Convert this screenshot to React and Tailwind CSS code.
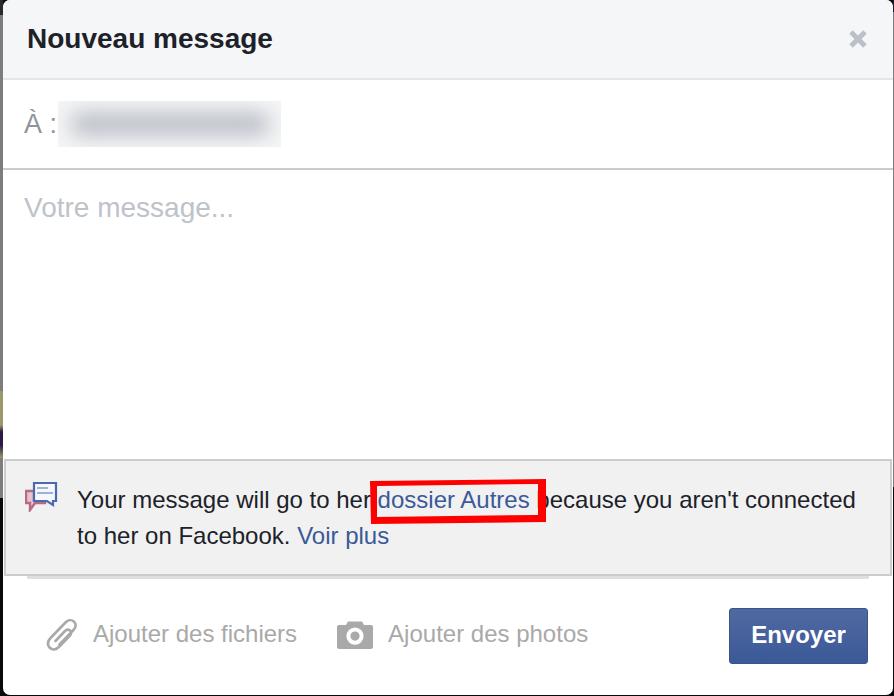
export default function App() {
  return (
    <div className="relative flex h-[696px] w-[894px] items-start overflow-hidden bg-[#0a0a0a] font-['Liberation_Sans',Arial,sans-serif]">
      {/* Page behind the dialog */}
      <div className="h-full w-[3px] shrink-0 bg-[linear-gradient(to_bottom,#2a2a2a_15px,#7d7d7d_15px,#7d7d7d_391px,#9a9a68_391px,#9a9a68_425px,#2a1a4a_432px,#2a1a4a_445px,#9a9a68_458px,#7d7d7d_458px,#7d7d7d_498px,#0a0a0a_498px)]" />

      {/* Dialog */}
      <div className="flex h-[695px] w-[890px] shrink-0 flex-col overflow-hidden rounded-[7px] bg-white">
        {/* Header */}
        <div className="flex h-[80px] shrink-0 items-center justify-between border-b-2 border-[#e5e6e9] bg-[#f5f6f7] pl-[24px] pr-[25px]">
          <h1 className="text-[28px] font-bold text-[#1d2129]">Nouveau message</h1>
          <svg width="20" height="20" viewBox="0 0 20 20">
            <path d="M3 3 L17 17 M17 3 L3 17" stroke="#bcc0c9" strokeWidth="5" />
          </svg>
        </div>

        {/* To */}
        <div className="flex h-[90px] shrink-0 items-center border-b-2 border-[#cccccc] pl-[21px]">
          <span className="w-[34px] text-[27px] text-[#90949c]">À :</span>
          <div className="h-[46px] w-[223px] overflow-hidden bg-[#f4f5f6]">
            <div className="ml-[12px] mt-[11px] h-[24px] w-[200px] rounded-full bg-[#bcc0c9] blur-[10px]" />
          </div>
        </div>

        {/* Message */}
        <div className="h-[289px] shrink-0 pl-[21px] pt-[17px] text-[28px] text-[#bec3c9]">Votre message...</div>

        {/* Notice */}
        <div className="mx-[1px] flex h-[117px] shrink-0 border-2 border-[#cccccc] bg-[#f1f1f1] pl-[19px] pt-[21px]">
          <svg width="33" height="30" viewBox="0 0 33 30" className="shrink-0">
            <path d="M1 9 H9 V18 H20 V21 H10 L5 28 L5 21 H1 Z" fill="#e8c3cf" stroke="#b76a85" strokeWidth="2.4" />
            <path d="M9 1 H31 V19 H28 V23 L22 19 H9 Z" fill="#f5f7fc" stroke="#4a6aab" strokeWidth="2.2" />
            <path d="M12 6 H23 M12 11 H28" stroke="#9db0d8" strokeWidth="2" />
          </svg>
          <p className="ml-[19px] w-[800px] text-[24px] leading-[36px] text-[#1d2129]">
            Your message will go to her <span className="text-[#3b5998]">dossier Autres</span> because you aren't connected
            to her on Facebook. <span className="text-[#3b5998]">Voir plus</span>
          </p>
        </div>
        <div className="mx-[24px] h-[3px] shrink-0 bg-[#dddfe2]" />

        {/* Footer */}
        <div className="flex flex-1 items-start pl-[43px] pr-[25px] pt-[29px]">
          <div className="flex h-[54px] items-center text-[24px] text-[#a9a9a9]">
            <svg width="34" height="34" viewBox="0 0 34 34" fill="none" className="mr-[13px]">
              <path
                d="M13.5 26.5 L27.5 12 C30 9.5 30.5 6 28 3.6 C25.5 1.3 22 2 19.5 4.5 L4.5 20 C1.5 23.2 1.3 27 3.8 29.8 C6.5 32.3 10 31.8 12.8 29 L24 17.5 C25.5 16 25.5 13.5 24 12.5 C22.5 11.2 20.5 11.5 19 13 L9.5 23"
                stroke="#a9a9a9"
                strokeWidth="2.6"
                strokeLinecap="round"
              />
            </svg>
            <span className="mt-[-2px]">Ajouter des fichiers</span>
            <svg width="36" height="28" viewBox="0 0 36 28" className="ml-[40px] mr-[15px]">
              <path
                fillRule="evenodd"
                fill="#a9a9a9"
                d="M2 4 H9 L11 0.5 H25 L27 4 H34 C35.2 4 36 4.8 36 6 V26 C36 27.2 35.2 28 34 28 H2 C0.8 28 0 27.2 0 26 V6 C0 4.8 0.8 4 2 4 Z M18 6.5 A8.6 8.6 0 1 0 18 23.7 A8.6 8.6 0 1 0 18 6.5 Z M18 10.5 A4.6 4.6 0 1 1 18 19.7 A4.6 4.6 0 1 1 18 10.5 Z"
              />
            </svg>
            <span className="mt-[-2px]">Ajouter des photos</span>
          </div>
          <button className="ml-auto h-[56px] w-[139px] rounded-[3px] border border-[#3b5487] bg-gradient-to-b from-[#5069a1] to-[#3b5998] pb-[2px] text-[24px] font-bold text-white">
            Envoyer
          </button>
        </div>
      </div>

      <div className="h-full w-[1px] shrink-0 bg-[linear-gradient(to_bottom,#1a1630_12px,#7d7d7d_12px,#7d7d7d_487px,#0a0a0a_487px)]" />

      {/* Red annotation */}
      <svg width="178" height="50" viewBox="0 0 178 50" className="absolute left-[369px] top-[476px]">
        <path
          fillRule="evenodd"
          fill="#fe0000"
          d="M1 5 L177 3 L177 46 L2 48 Z M8 10 L8 41 L169 39 L169 8 Z"
        />
      </svg>
    </div>
  );
}
